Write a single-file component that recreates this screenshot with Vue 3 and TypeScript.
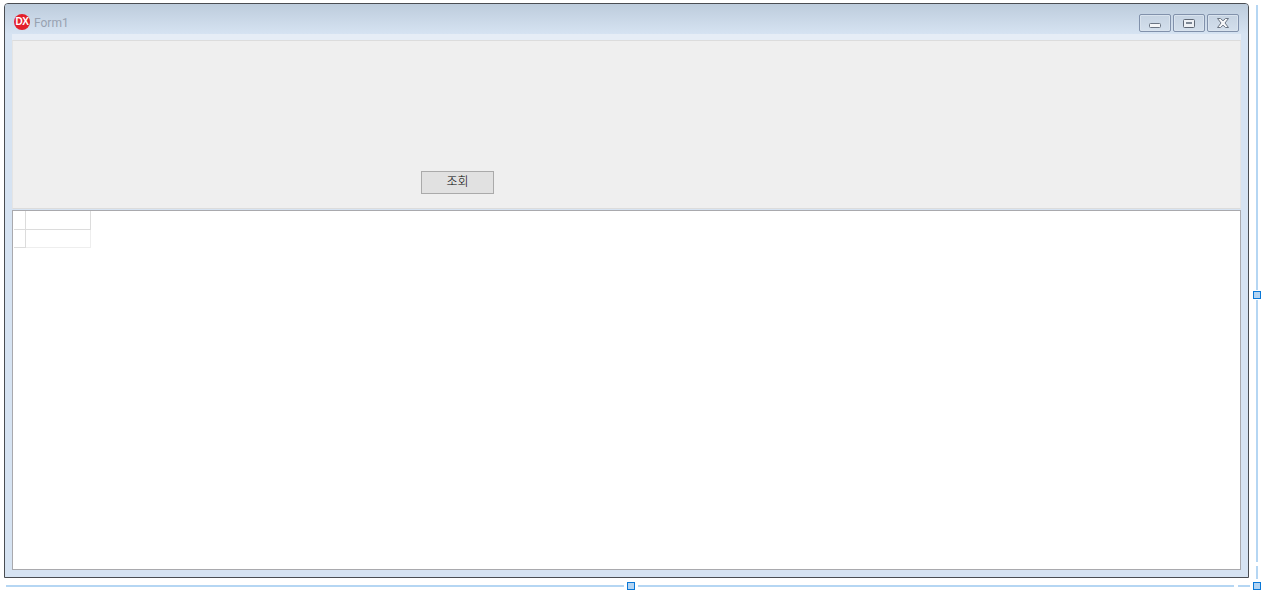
<script setup lang="ts">
const gridRows: number[] = [0, 1]
</script>

<template>
  <div class="canvas">
    <div class="form">
      <header class="titlebar">
        <div class="logo">DX</div>
        <span class="title">Form1</span>
        <div class="controls">
          <button class="ctl" type="button" aria-label="Minimize">
            <svg width="12" height="5" viewBox="0 0 12 5"><rect x="0.5" y="0.5" width="11" height="4" rx="1" fill="#f4f6f8" stroke="#6b7583" /></svg>
          </button>
          <button class="ctl" type="button" aria-label="Maximize">
            <svg width="12" height="9" viewBox="0 0 12 9"><rect x="0.5" y="0.5" width="11" height="8" rx="1" fill="#eef1f5" stroke="#5f6875" /><rect x="3" y="3" width="6" height="2" fill="#7d8794" /></svg>
          </button>
          <button class="ctl" type="button" aria-label="Close">
            <svg width="12" height="10" viewBox="0 0 12 10"><path d="M0.5 0.5h3L6 2.8 8.5 0.5h3L8 5l3.5 4.5h-3L6 7.2 3.5 9.5h-3L4 5Z" fill="#f6f7f9" stroke="#6b7583" stroke-width="1" stroke-linejoin="round" /></svg>
          </button>
        </div>
      </header>
      <div class="client">
        <div class="strip"></div>
        <section class="panel">
          <button class="query" type="button">조회</button>
        </section>
        <section class="grid">
          <div class="table">
            <div v-for="r in gridRows" :key="r" class="row">
              <div class="indicator"></div>
              <div class="cell"></div>
            </div>
          </div>
        </section>
      </div>
    </div>

    <div class="sel line-r line-r1"></div>
    <div class="sel line-r line-r2"></div>
    <div class="sel line-r line-r3"></div>
    <div class="sel line-b line-b1"></div>
    <div class="sel line-b line-b2"></div>
    <div class="sel line-b line-b3"></div>
    <div class="handle handle-r"></div>
    <div class="handle handle-b"></div>
    <div class="handle handle-c"></div>
  </div>
</template>

<style scoped>
.canvas {
  position: relative;
  width: 1274px;
  height: 608px;
  padding: 3px 0 0 4px;
  box-sizing: border-box;
  background: #fff;
  overflow: hidden;
}
.form {
  width: 1245px;
  height: 575px;
  box-sizing: border-box;
  border: 1px solid #4a4d52;
  border-radius: 4px 4px 0 0;
  background: #d6e3f2;
  display: flex;
  flex-direction: column;
}
.titlebar {
  height: 30px;
  flex: none;
  box-sizing: border-box;
  display: flex;
  align-items: flex-start;
  padding: 10px 9px 0 9px;
  background: linear-gradient(#bdccdc, #d6e3f2);
  border-radius: 3px 3px 0 0;
}
.logo {
  width: 16px;
  height: 16px;
  border-radius: 50%;
  background: #e3202b;
  color: #fff;
  font: bold 10px/16px "Liberation Sans", sans-serif;
  text-align: center;
  letter-spacing: -0.5px;
}
.title {
  margin-left: 4px;
  font: 12px/19px Roboto, sans-serif;
  color: #98a2b1;
}
.controls {
  margin-left: auto;
  display: flex;
  gap: 2px;
}
.ctl {
  width: 32px;
  height: 18px;
  box-sizing: border-box;
  padding: 0;
  border: 1px solid #8191ab;
  border-radius: 2px;
  box-shadow: inset 0 0 0 1px #d9e3ee;
  background: linear-gradient(#c6d3e2, #d3dfec);
  display: flex;
  align-items: center;
  justify-content: center;
}
.ctl:first-child svg {
  margin-top: 5px;
}
.client {
  flex: 1;
  margin: 0 7px 7px 7px;
  display: flex;
  flex-direction: column;
  min-height: 0;
}
.strip {
  height: 6px;
  flex: none;
  background: #e6edf6;
}
.panel {
  height: 169px;
  flex: none;
  margin-bottom: 1px;
  box-sizing: border-box;
  background: #efefef;
  border-top: 1px solid #dcdcdc;
  border-bottom: 1px solid #dcdcdc;
  border-left: 1px solid #e4e4e4;
  border-right: 1px solid #e4e4e4;
  padding: 130px 0 0 408px;
}
.query {
  display: block;
  width: 73px;
  height: 23px;
  box-sizing: border-box;
  padding: 0 0 4px;
  border: 1px solid #aaaaaa;
  background: #e1e1e1;
  color: #000;
  font: 300 12px "Noto Sans CJK KR", sans-serif;
}
.grid {
  flex: 1;
  min-height: 0;
  box-sizing: border-box;
  background: #fff;
  border: 1px solid #a9a9ad;
  padding: 0 0 0 1px;
}
.table {
  width: 77px;
}
.row {
  display: flex;
  height: 18px;
}
.row:first-child {
  height: 19px;
}
.indicator {
  width: 11px;
  border-right: 1px solid #dcdcdc;
  border-bottom: 1px solid #dcdcdc;
}
.cell {
  flex: 1;
  border-right: 1px solid #dcdcdc;
  border-bottom: 1px solid #dcdcdc;
}
.row:last-child .cell {
  border-color: #eeeeee;
}
.sel {
  position: absolute;
  background: #b5d6f3;
}
.line-r {
  left: 1256px;
  width: 2px;
}
.line-r1 { top: 5px; height: 285px; }
.line-r2 { top: 300px; height: 262px; }
.line-r3 { top: 566px; height: 13px; }
.line-b {
  top: 585px;
  height: 2px;
}
.line-b1 { left: 6px; width: 618px; }
.line-b2 { left: 638px; width: 596px; }
.line-b3 { left: 1238px; width: 12px; }
.handle {
  position: absolute;
  width: 8px;
  height: 8px;
  box-sizing: border-box;
  background: #b3d4f2;
  border: 1px solid #0a78d7;
}
.handle-r { left: 1253px; top: 291px; }
.handle-b { left: 627px; top: 582px; }
.handle-c { left: 1253px; top: 582px; }
</style>
